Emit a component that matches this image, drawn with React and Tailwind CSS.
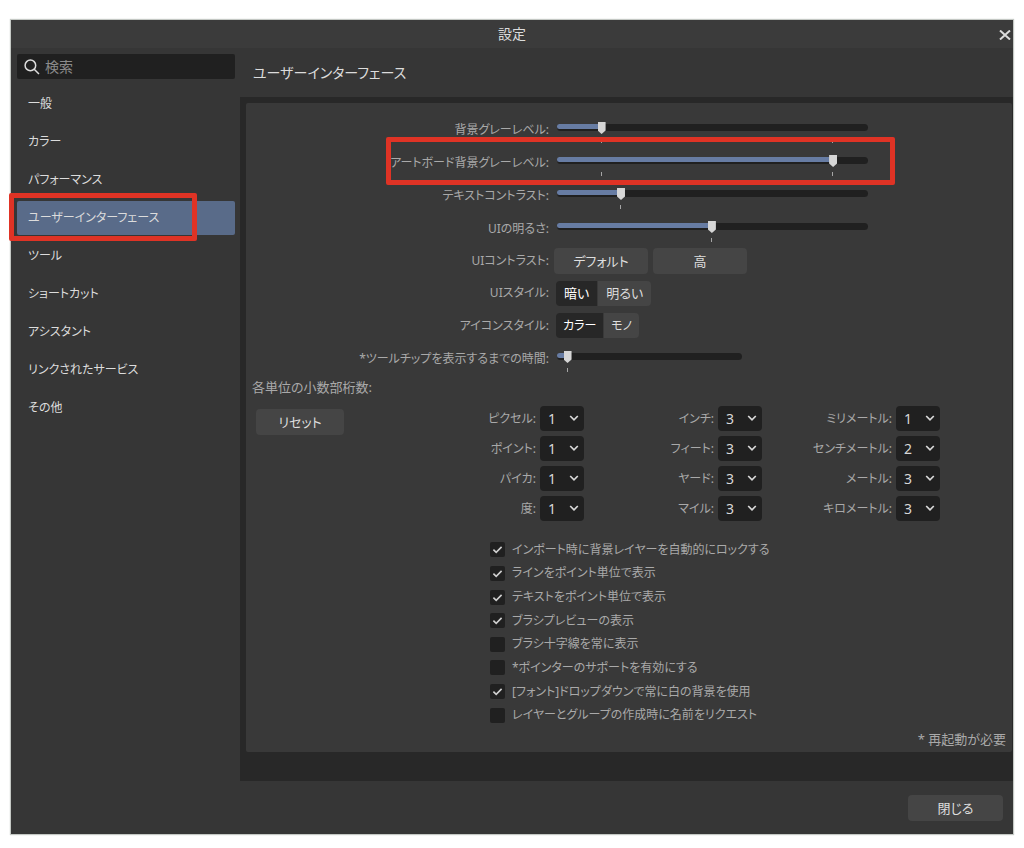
import React, { useState } from "react";

const NAV = [
  "一般",
  "カラー",
  "パフォーマンス",
  "ユーザーインターフェース",
  "ツール",
  "ショートカット",
  "アシスタント",
  "リンクされたサービス",
  "その他",
];

const UNITS = [
  ["ピクセル", 1],
  ["インチ", 3],
  ["ミリメートル", 1],
  ["ポイント", 1],
  ["フィート", 3],
  ["センチメートル", 2],
  ["パイカ", 1],
  ["ヤード", 3],
  ["メートル", 3],
  ["度", 1],
  ["マイル", 3],
  ["キロメートル", 3],
];

const OPTIONS = [
  ["インポート時に背景レイヤーを自動的にロックする", true],
  ["ラインをポイント単位で表示", true],
  ["テキストをポイント単位で表示", true],
  ["ブラシプレビューの表示", true],
  ["ブラシ十字線を常に表示", false],
  ["*ポインターのサポートを有効にする", false],
  ["[フォント]ドロップダウンで常に白の背景を使用", true],
  ["レイヤーとグループの作成時に名前をリクエスト", false],
];

const along = (v, inset = 4) => `calc(${inset}px + (100% - 8px) * ${v / 1000})`;

function Slider({ id, initial, ticks, short }) {
  const [value, setValue] = useState(initial);
  return (
    <div className={`relative h-full max-w-full ${short ? "w-[185px]" : "w-[311px]"}`}>
      <div className="absolute inset-x-0 top-[11px] h-[7px] rounded-full bg-[#202020]">
        <div className="h-[5px] rounded-l-full bg-[#677ca3]" style={{ width: along(value) }} />
      </div>
      {ticks.map((t) => (
        <span
          key={t}
          className="absolute top-[26px] h-1 w-px bg-[#a5a5a5]"
          style={{ left: along(t, 3) }}
        />
      ))}
      <input
        id={id}
        type="range"
        min="0"
        max="1000"
        value={value}
        onChange={(e) => setValue(Number(e.target.value))}
        className="absolute inset-x-0 top-[9px] m-0 h-3 w-full appearance-none bg-transparent [&::-webkit-slider-thumb]:h-3 [&::-webkit-slider-thumb]:w-2 [&::-webkit-slider-thumb]:appearance-none [&::-webkit-slider-thumb]:bg-[#d6d6d6] [&::-webkit-slider-thumb]:[clip-path:polygon(0_0,100%_0,100%_70%,50%_100%,0_70%)]"
      />
    </div>
  );
}

function SliderRow({ id, label, marked, ...rest }) {
  return (
    <div className="relative grid h-[33px] grid-cols-[303fr_463fr]">
      <label htmlFor={id} className="self-center text-right text-xs leading-5">
        {label}:
      </label>
      <div className="pl-2">
        <Slider id={id} {...rest} />
      </div>
      {marked && (
        <div className="pointer-events-none absolute -top-[9px] left-[140px] h-12 w-[509px] rounded-xs border-[5px] border-[#df3325]" />
      )}
    </div>
  );
}

function ChoiceRow({ label, tall, children }) {
  return (
    <div role="group" aria-label={label} className={`grid grid-cols-[303fr_463fr] items-center ${tall ? "h-[33px]" : "h-8"}`}>
      <span className="text-right text-xs leading-5">{label}:</span>
      {children}
    </div>
  );
}

function Segments({ items, compact }) {
  const [chosen, setChosen] = useState(0);
  return (
    <div className={`flex gap-px pl-[7px] text-[#dedede] ${compact ? "text-xs" : "text-[13px]"}`}>
      {items.map((item, i) => (
        <button
          key={item}
          type="button"
          aria-pressed={i === chosen}
          onClick={() => setChosen(i)}
          className={`h-[25px] leading-5 first:rounded-l-sm last:rounded-r-sm ${compact ? "px-[7px]" : "px-2"} ${
            i === chosen ? "bg-[#272727] text-white" : "bg-[#454545]"
          }`}
        >
          {item}
        </button>
      ))}
    </div>
  );
}

function UnitField({ index, name, value }) {
  const id = `unit-${index}`;
  return (
    <div className="flex items-center justify-end gap-1">
      <label htmlFor={id} className="text-xs leading-5">
        {name}:
      </label>
      <div className="relative">
        <select
          id={id}
          defaultValue={value}
          className="block h-[25px] w-11 appearance-none rounded-sm bg-[#202020] pl-2 text-[#d8d8d8]"
        >
          {[0, 1, 2, 3, 4, 5, 6].map((n) => (
            <option key={n}>{n}</option>
          ))}
        </select>
        <svg
          viewBox="0 0 10 7"
          className="pointer-events-none absolute top-[9px] right-[5px] h-[7px] w-[10px] fill-none stroke-[#d8d8d8] stroke-[1.7]"
        >
          <path d="M1.2 1 L5 4.8 L8.8 1" />
        </svg>
      </div>
    </div>
  );
}

function Option({ label, initial }) {
  return (
    <label className="flex items-center gap-[7px] text-xs leading-5">
      <span className="relative block size-[15px]">
        <input
          type="checkbox"
          defaultChecked={initial}
          className="peer block size-[15px] appearance-none rounded-xs bg-[#202020]"
        />
        <svg
          viewBox="0 0 15 15"
          className="pointer-events-none absolute inset-0 hidden size-[15px] fill-none stroke-[#d0d0d0] stroke-[1.6] peer-checked:block"
        >
          <path d="M3.4 7.6 L6.2 10.3 L11.6 4.9" />
        </svg>
      </span>
      {label}
    </label>
  );
}

const raised = "rounded-sm bg-[#454545] text-center text-[13px] leading-5 text-[#dedede]";

export default function App() {
  const [page, setPage] = useState(3);
  return (
    <div className="min-h-screen bg-white px-[11px] pt-5 pb-3 font-['Noto_Sans','Noto_Sans_CJK_JP',sans-serif] text-sm [font-feature-settings:'palt']">
      <div className="bg-[#363636] text-[#a9a9a9] shadow-[0_0_1px_1px_#c4c8c4]">
        <header className="relative flex h-7 items-center justify-center bg-[#3b3b3b] text-[#dcdcdc]">
          <h1>設定</h1>
          <button type="button" aria-label="閉じる" className="absolute top-[10px] right-[2px] p-0">
            <svg viewBox="0 0 12 10" className="h-[10px] w-3 fill-none stroke-[#dcdcdc] stroke-2">
              <path d="M1 0.5 L11 9.5 M11 0.5 L1 9.5" />
            </svg>
          </button>
        </header>

        <div className="flex">
          <aside className="w-[229px] shrink-0 pt-[6px] pr-[5px] pl-[6px]">
            <div className="flex h-[25px] items-center gap-[5px] rounded-xs bg-[#202020] pl-[7px]">
              <svg viewBox="0 0 16 16" className="size-4 shrink-0 fill-none stroke-[#dcdcdc] stroke-[1.5]">
                <circle cx="6.4" cy="6.4" r="5.3" />
                <path d="M10.2 10.2 L15 15" />
              </svg>
              <input
                type="text"
                aria-label="検索"
                placeholder="検索"
                className="w-full min-w-0 bg-transparent outline-none placeholder:text-[#8b8b8b]"
              />
            </div>
            <nav className="mt-2 flex flex-col gap-1">
              {NAV.map((name, i) => (
                <div key={name} className="relative">
                  <button
                    type="button"
                    onClick={() => setPage(i)}
                    className={`block h-[34px] w-full rounded-xs pl-[11px] text-left text-xs leading-5 text-[#dcdcdc] ${
                      i === page ? "bg-[#596b89]" : ""
                    }`}
                  >
                    {name}
                  </button>
                  {i === 3 && (
                    <div className="pointer-events-none absolute -top-2 -left-2 h-12 w-[188px] rounded-xs border-[5px] border-[#df3325]" />
                  )}
                </div>
              ))}
            </nav>
          </aside>

          <main className="min-w-0 flex-1">
            <h2 className="flex h-[49px] items-center pl-[13px] text-[#dcdcdc]">
              ユーザーインターフェース
            </h2>
            <div className="bg-[#282828] pt-[6px] pr-px pb-[29px] pl-[6px]">
              <section className="rounded-xs bg-[#393939] pt-[10px] pb-px">
                <SliderRow id="bg-gray" label="背景グレーレベル" initial={134} ticks={[134, 898]} />
                <SliderRow
                  id="artboard-gray"
                  label="アートボード背景グレーレベル"
                  initial={898}
                  ticks={[134, 898]}
                  marked
                />
                <SliderRow id="text-contrast" label="テキストコントラスト" initial={198} ticks={[198]} />
                <SliderRow id="ui-brightness" label="UIの明るさ" initial={498} ticks={[498]} />
                <ChoiceRow label="UIコントラスト">
                  <div className="flex gap-[5px] pl-[5px]">
                    <button type="button" className={`h-[26px] w-[94px] ${raised}`}>
                      デフォルト
                    </button>
                    <button type="button" className={`h-[26px] w-[94px] ${raised}`}>
                      高
                    </button>
                  </div>
                </ChoiceRow>
                <ChoiceRow label="UIスタイル">
                  <Segments items={["暗い", "明るい"]} />
                </ChoiceRow>
                <ChoiceRow label="アイコンスタイル" tall>
                  <Segments items={["カラー", "モノ"]} compact />
                </ChoiceRow>
                <SliderRow
                  id="tooltip-delay"
                  label="*ツールチップを表示するまでの時間"
                  initial={37}
                  ticks={[37]}
                  short
                />

                <h3 className="h-[31px] pt-[2px] pl-[6px] text-[13px] leading-5">各単位の小数部桁数:</h3>
                <div className="flex">
                  <div className="w-[160px] shrink-0 pt-[3px] pl-[10px]">
                    <button type="button" className={`h-[26px] w-[88px] ${raised}`}>
                      リセット
                    </button>
                  </div>
                  <div className="mr-[72px] grid flex-1 grid-cols-3 gap-y-[5px]">
                    {UNITS.map(([name, value], i) => (
                      <UnitField key={name} index={i} name={name} value={value} />
                    ))}
                  </div>
                </div>

                <div className="mt-[17px] grid h-[189px] grid-rows-8 justify-start pl-[244px]">
                  {OPTIONS.map(([label, initial]) => (
                    <Option key={label} label={label} initial={initial} />
                  ))}
                </div>
                <p className="pr-[6px] text-right text-[13px] leading-6">* 再起動が必要</p>
              </section>
            </div>
          </main>
        </div>

        <footer className="flex h-[53px] items-center justify-end pr-[10px]">
          <button type="button" className={`h-[26px] w-[95px] ${raised}`}>
            閉じる
          </button>
        </footer>
      </div>
    </div>
  );
}
